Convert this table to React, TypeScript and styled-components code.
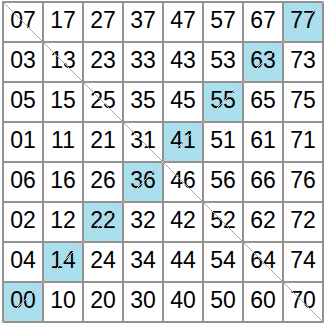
import React from "react"
import styled, { createGlobalStyle } from "styled-components"

const GlobalStyle = createGlobalStyle`
  body {
    margin: 0;
    background: #ffffff;
    font-family: "Liberation Sans", Arial, sans-serif;
  }
`

const Board = styled.div`
  position: relative;
  margin: 1px 0 0 2px;
  width: max-content;
`

const Grid = styled.div`
  display: grid;
  grid-template-columns: repeat(8, 38px);
  grid-auto-rows: 38px;
  gap: 2px;
  padding: 2px;
  background: #929292;
`

const Cell = styled.div<{ $hl?: boolean }>`
  display: flex;
  align-items: center;
  justify-content: center;
  padding-bottom: 3px;
  box-sizing: border-box;
  background: ${(p) => (p.$hl ? "#aadfee" : "#ffffff")};
  color: #000000;
  font-size: 23px;
`

const Diagonals = styled.svg`
  position: absolute;
  inset: 0;
  width: 100%;
  height: 100%;
  pointer-events: none;
`

const rows = [7, 3, 5, 1, 6, 2, 4, 0]

export default function App() {
  return (
    <>
      <GlobalStyle />
      <Board>
        <Grid>
          {rows.map((r, ri) =>
            Array.from({ length: 8 }, (_, c) => (
              <Cell key={`${c}${r}`} $hl={c + ri === 7}>
                {`${c}${r}`}
              </Cell>
            ))
          )}
        </Grid>
        <Diagonals viewBox="0 0 322 322" preserveAspectRatio="none">
          <line x1="0" y1="0" x2="322" y2="322" stroke="#a8a8a8" strokeWidth="1" />
          <line x1="0" y1="322" x2="322" y2="0" stroke="#cdc3c3" strokeWidth="1" />
        </Diagonals>
      </Board>
    </>
  )
}
